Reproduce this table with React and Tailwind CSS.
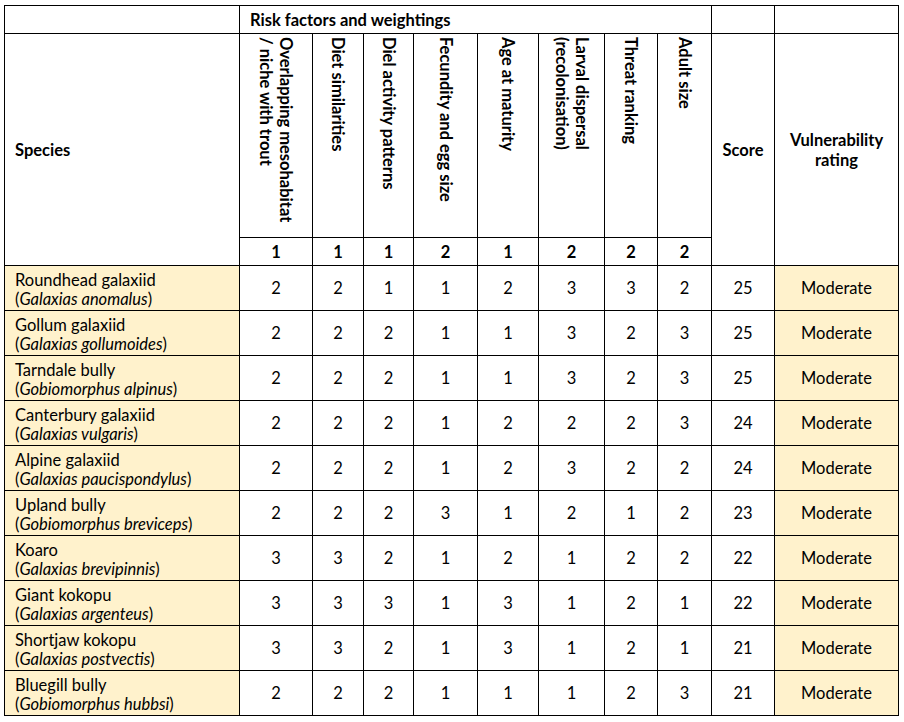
const FACTORS = [
  { label: ['Overlapping mesohabitat', '/ niche with trout'], weight: 1 },
  { label: ['Diet similarities'], weight: 1 },
  { label: ['Diel activity patterns'], weight: 1 },
  { label: ['Fecundity and egg size'], weight: 2 },
  { label: ['Age at maturity'], weight: 1 },
  { label: ['Larval dispersal', '(recolonisation)'], weight: 2 },
  { label: ['Threat ranking'], weight: 2 },
  { label: ['Adult size'], weight: 2 },
]

const ROWS = [
  { name: 'Roundhead galaxiid', sci: 'Galaxias anomalus', s: [2, 2, 1, 1, 2, 3, 3, 2], score: 25 },
  { name: 'Gollum galaxiid', sci: 'Galaxias gollumoides', s: [2, 2, 2, 1, 1, 3, 2, 3], score: 25 },
  { name: 'Tarndale bully', sci: 'Gobiomorphus alpinus', s: [2, 2, 2, 1, 1, 3, 2, 3], score: 25 },
  { name: 'Canterbury galaxiid', sci: 'Galaxias vulgaris', s: [2, 2, 2, 1, 2, 2, 2, 3], score: 24 },
  { name: 'Alpine galaxiid', sci: 'Galaxias paucispondylus', s: [2, 2, 2, 1, 2, 3, 2, 2], score: 24 },
  { name: 'Upland bully', sci: 'Gobiomorphus breviceps', s: [2, 2, 2, 3, 1, 2, 1, 2], score: 23 },
  { name: 'Koaro', sci: 'Galaxias brevipinnis', s: [3, 3, 2, 1, 2, 1, 2, 2], score: 22 },
  { name: 'Giant kokopu', sci: 'Galaxias argenteus', s: [3, 3, 3, 1, 3, 1, 2, 1], score: 22 },
  { name: 'Shortjaw kokopu', sci: 'Galaxias postvectis', s: [3, 3, 2, 1, 3, 1, 2, 1], score: 21 },
  { name: 'Bluegill bully', sci: 'Gobiomorphus hubbsi', s: [2, 2, 2, 1, 1, 1, 2, 3], score: 21 },
]

const WIDTHS = [235, 73, 51, 50, 64, 61, 66, 53, 54, 63, 124]

export default function App() {
  return (
    <div className="min-h-screen bg-white pl-[4px] pt-[5px] font-['Lato','Open_Sans',sans-serif] text-[16.5px] leading-[20px] text-black">
      <table className="table-fixed border-collapse border border-black">
        <colgroup>
          {WIDTHS.map((w, i) => (
            <col key={i} style={{ width: w }} />
          ))}
        </colgroup>
        <thead>
          <tr className="h-[28px]">
            <th className="border border-black" />
            <th colSpan={8} className="border border-black px-[10px] text-left align-middle font-bold">
              Risk factors and weightings
            </th>
            <th className="border border-black" />
            <th className="border border-black" />
          </tr>
          <tr className="h-[204px]">
            <th rowSpan={2} className="border border-black px-[10px] text-left align-middle font-bold">
              Species
            </th>
            {FACTORS.map((f, i) => (
              <th key={i} className="border border-black px-1 pt-[3px] text-center align-top font-bold">
                <div className="inline-block text-left [writing-mode:vertical-rl]">
                  {f.label.map((l, j) => (
                    <span key={j}>
                      {j > 0 && <br />}
                      {l}
                    </span>
                  ))}
                </div>
              </th>
            ))}
            <th rowSpan={2} className="border border-black text-center align-middle font-bold">
              Score
            </th>
            <th rowSpan={2} className="border border-black px-2 text-center align-middle font-bold">
              Vulnerability
              <br />
              rating
            </th>
          </tr>
          <tr className="h-[28px]">
            {FACTORS.map((f, i) => (
              <th key={i} className="border border-black text-center align-middle font-bold">
                {f.weight}
              </th>
            ))}
          </tr>
        </thead>
        <tbody>
          {ROWS.map((r, i) => (
            <tr key={i} className="h-[45px]">
              <td className="border border-black bg-[#fff2cc] px-[10px] pt-[3px] align-middle leading-[19px]">
                {r.name}
                <br />(<span className="italic">{r.sci}</span>)
              </td>
              {r.s.map((v, j) => (
                <td key={j} className="border border-black text-center align-middle">
                  {v}
                </td>
              ))}
              <td className="border border-black text-center align-middle">{r.score}</td>
              <td className="border border-black bg-[#fff2cc] text-center align-middle">Moderate</td>
            </tr>
          ))}
        </tbody>
      </table>
    </div>
  )
}
